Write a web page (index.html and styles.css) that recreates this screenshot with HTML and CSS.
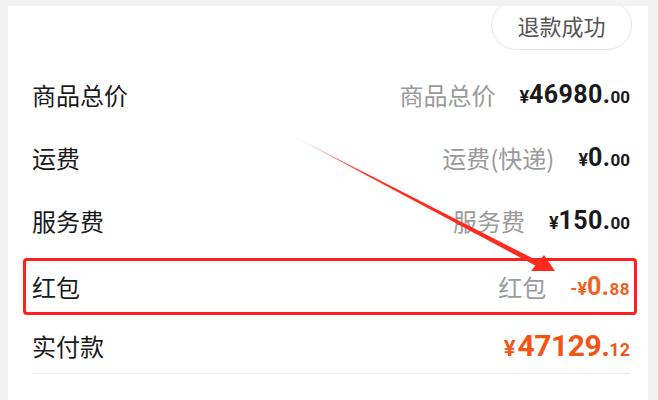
FILE: index.html
```html
<!DOCTYPE html>
<html lang="zh-CN">
<head>
    <meta charset="UTF-8">
    <meta name="viewport" content="width=device-width, initial-scale=1.0">
    <title>订单金额</title>
    <link rel="stylesheet" href="styles.css">
</head>
<body>
    <div class="card">
        <div class="card-head">
            <button class="status-btn">退款成功</button>
        </div>

        <div class="row">
            <span class="label">商品总价</span>
            <span class="right">
                <span class="hint">商品总价</span>
                <span class="amount"><span class="yen">¥</span><span class="int">46980.</span><span class="dec">00</span></span>
            </span>
        </div>
        <div class="row">
            <span class="label">运费</span>
            <span class="right">
                <span class="hint">运费(快递)</span>
                <span class="amount"><span class="yen">¥</span><span class="int">0.</span><span class="dec">00</span></span>
            </span>
        </div>
        <div class="row">
            <span class="label">服务费</span>
            <span class="right">
                <span class="hint">服务费</span>
                <span class="amount"><span class="yen">¥</span><span class="int">150.</span><span class="dec">00</span></span>
            </span>
        </div>
        <div class="row row-packet">
            <span class="label">红包</span>
            <span class="right">
                <span class="hint">红包</span>
                <span class="amount amount-minus"><span class="yen">-¥</span><span class="int">0.</span><span class="dec">88</span></span>
            </span>
        </div>
        <div class="row row-total">
            <span class="label">实付款</span>
            <span class="amount amount-total"><span class="yen">¥</span><span class="int">47129.</span><span class="dec">12</span></span>
        </div>
        <div class="divider"></div>

        <!-- annotation drawn over the screenshot -->
        <div class="mark-box"></div>
        <svg class="mark-arrow" width="658" height="400" viewBox="0 0 658 400">
            <defs>
                <linearGradient id="fade" x1="290" y1="135" x2="555" y2="270" gradientUnits="userSpaceOnUse">
                    <stop offset="0" stop-color="#ff2a1f" stop-opacity="0.1"/>
                    <stop offset="0.3" stop-color="#ff2a1f" stop-opacity="1"/>
                </linearGradient>
            </defs>
            <polygon points="290,134.5 540,262 537,266.5" fill="url(#fade)"/>
            <polygon points="555,271 531,271 544,255" fill="#ff2a1f"/>
        </svg>
    </div>
</body>
</html>
```

FILE: styles.css
```css
body { margin: 0; background: #f2f2f2; font-family: "Noto Sans CJK SC", "Noto Sans", sans-serif; color: #1a1a1a; overflow: hidden; }
.card { position: relative; margin: 6px 10px 0 8px; height: 420px; background: #fff; overflow: hidden; padding: 0 18px 0 24px; }
.card-head { display: flex; justify-content: flex-end; height: 57px; margin-right: -2px; }
.status-btn { margin-top: -6px; height: 50px; width: 141px; border: 1px solid #e6e6e6; border-radius: 25px; background: #fff; color: #555; font-family: inherit; font-size: 22px; padding: 0; }

.row { display: flex; align-items: center; justify-content: space-between; height: 63px; }
.row-packet { margin-top: 3px; }
.row-total { height: 55px; }
.label { font-size: 24px; color: #1a1a1a; }
.right { display: flex; align-items: center; gap: 24px; }
.hint { font-size: 24px; color: #9a9a9a; }

.amount { font-family: Roboto, "Noto Sans", sans-serif; font-weight: bold; color: #1a1a1a; white-space: nowrap; }
.amount .yen { font-size: 18px; }
.amount .int { font-size: 25px; letter-spacing: 0.4px; }
.amount .dec { font-size: 17px; }
.amount-minus { color: #f0621e; }
.amount-minus .yen { font-size: 18px; }
.amount-minus .int { font-size: 25px; }
.amount-minus .dec { font-size: 17px; letter-spacing: 0.5px; }
.amount-total { color: #f25516; }
.amount-total .yen { font-size: 22px; margin-right: 2px; }
.amount-total .int { font-size: 30px; letter-spacing: -0.5px; }
.amount-total .dec { font-size: 18px; }

.divider { height: 1px; background: #ececec; }

.mark-box { position: absolute; left: 15px; top: 252px; width: 608px; height: 51px; border: 3px solid #ff1f1f; border-radius: 4px; }
.mark-arrow { position: absolute; left: -8px; top: -6px; }
```
